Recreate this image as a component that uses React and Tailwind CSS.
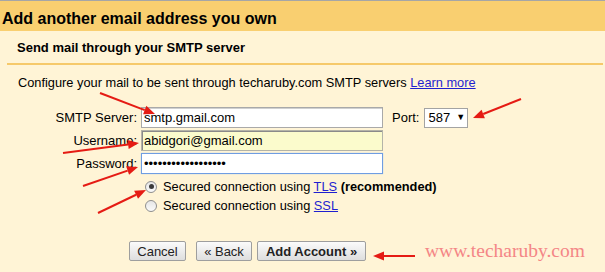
import React from 'react';

const RED = '#e51b14';

function Arrow({ x1, y1, x2, y2 }) {
  const a = Math.atan2(y2 - y1, x2 - x1);
  const len = 11;
  const half = 4.5;
  const bx = x2 - len * Math.cos(a);
  const by = y2 - len * Math.sin(a);
  const px = -Math.sin(a) * half;
  const py = Math.cos(a) * half;
  return (
    <g>
      <line x1={x1} y1={y1} x2={bx} y2={by} stroke={RED} strokeWidth="2" />
      <polygon points={`${x2},${y2} ${bx + px},${by + py} ${bx - px},${by - py}`} fill={RED} />
    </g>
  );
}

function Radio({ checked }) {
  return (
    <span className="w-[12px] h-[12px] rounded-full border border-[#8e8e8e] bg-gradient-to-b from-[#e6e6e6] to-[#fafafa] flex items-center justify-center shrink-0">
      {checked && <span className="w-[5px] h-[5px] rounded-full bg-[#3a3a3a]" />}
    </span>
  );
}

function Button({ children, bold, className = '' }) {
  return (
    <button className={`h-[20px] px-0 whitespace-nowrap border border-[#9e9e9e] rounded-[2px] bg-gradient-to-b from-[#fbfbfb] to-[#dedede] text-[13px] leading-none text-[#222] ${bold ? 'font-bold' : ''} ${className}`}>
      {children}
    </button>
  );
}

export default function App() {
  return (
    <div className="relative w-[605px] h-[272px] overflow-hidden bg-[#fff4d6] border-t border-[#a6a6a6] font-['Liberation_Sans',Arial,sans-serif] text-[13px] text-black">
      {/* Title bar */}
      <div className="h-[30px] bg-[#f9cf70] pl-[2px] pt-[9px] text-[16px] leading-[18px] font-bold">
        Add another email address you own
      </div>

      {/* Subtitle */}
      <div className="ml-[7px] w-[596px] h-[34px] border-b-2 border-[#f6c96a] pl-[10px] pt-[9px] font-bold leading-[15px]">
        Send mail through your SMTP server
      </div>

      <div className="pl-[18px] pt-[10px] leading-[15px] text-[12.8px]">
        Configure your mail to be sent through techaruby.com SMTP servers{' '}
        <a href="#" className="text-[#1f1fd0] underline">Learn more</a>
      </div>

      {/* Form */}
      <div className="mt-[17px] flex flex-col gap-[2px]">
        <div className="flex items-center h-[21px]">
          <span className="w-[137px] text-right">SMTP Server:</span>
          <input
            readOnly
            defaultValue="smtp.gmail.com"
            className="ml-[4px] w-[242px] h-[21px] px-[2px] bg-white border border-[#a9a9a9] shadow-[inset_0_1px_0_#d0d0d0] outline-none"
          />
          <span className="ml-[9px]">Port:</span>
          <div className="ml-[5px] w-[44px] h-[20px] bg-white border border-[#a3a3a3] flex items-center pl-[3px] gap-[6px]">
            <span>587</span>
            <span className="text-[9px] leading-none">▼</span>
          </div>
        </div>
        <div className="flex items-center h-[21px]">
          <span className="w-[137px] text-right">Username:</span>
          <input
            readOnly
            defaultValue="abidgori@gmail.com"
            className="ml-[4px] w-[242px] h-[21px] px-[2px] bg-[#fbfbcc] border border-[#b4b4a8] shadow-[inset_1px_1px_0_#8a8a8a] outline-none"
          />
        </div>
        <div className="flex items-center h-[21px]">
          <span className="w-[137px] text-right">Password:</span>
          <input
            readOnly
            type="password"
            defaultValue="abcdefghijklmnopqr"
            className="ml-[4px] w-[242px] h-[21px] px-[2px] bg-white border border-[#6f9de2] shadow-[0_0_1px_#9fc0ee] outline-none"
          />
        </div>
      </div>

      <div className="mt-[3px] ml-[145px] flex flex-col text-[12.8px]">
        <div className="flex items-center h-[19px] gap-[6px]">
          <Radio checked />
          <span>
            Secured connection using <a href="#" className="text-[#1f1fd0] underline">TLS</a>{' '}
            <b>(recommended)</b>
          </span>
        </div>
        <div className="flex items-center h-[19px] gap-[6px]">
          <Radio />
          <span>
            Secured connection using <a href="#" className="text-[#1f1fd0] underline">SSL</a>
          </span>
        </div>
      </div>

      <div className="mt-[26px] ml-[129px] flex items-center">
        <Button className="w-[57px]">Cancel</Button>
        <Button className="ml-[10px] w-[56px]">« Back</Button>
        <Button bold className="ml-[5px] w-[109px]">Add Account »</Button>
        <span className="ml-[59px] font-['Liberation_Serif','Times_New_Roman',serif] text-[19.5px] leading-none text-[#f48686]">
          www.techaruby.com
        </span>
      </div>

      {/* annotation arrows */}
      <svg className="absolute inset-0 pointer-events-none" width="605" height="272">
        <Arrow x1={100} y1={92} x2={155} y2={113} />
        <Arrow x1={63} y1={152} x2={139} y2={142} />
        <Arrow x1={83} y1={185} x2={138} y2={166} />
        <Arrow x1={98} y1={212} x2={146} y2={189} />
        <Arrow x1={521} y1={98} x2={473} y2={117} />
        <Arrow x1={415} y1={255} x2={373} y2={255} />
      </svg>
    </div>
  );
}
